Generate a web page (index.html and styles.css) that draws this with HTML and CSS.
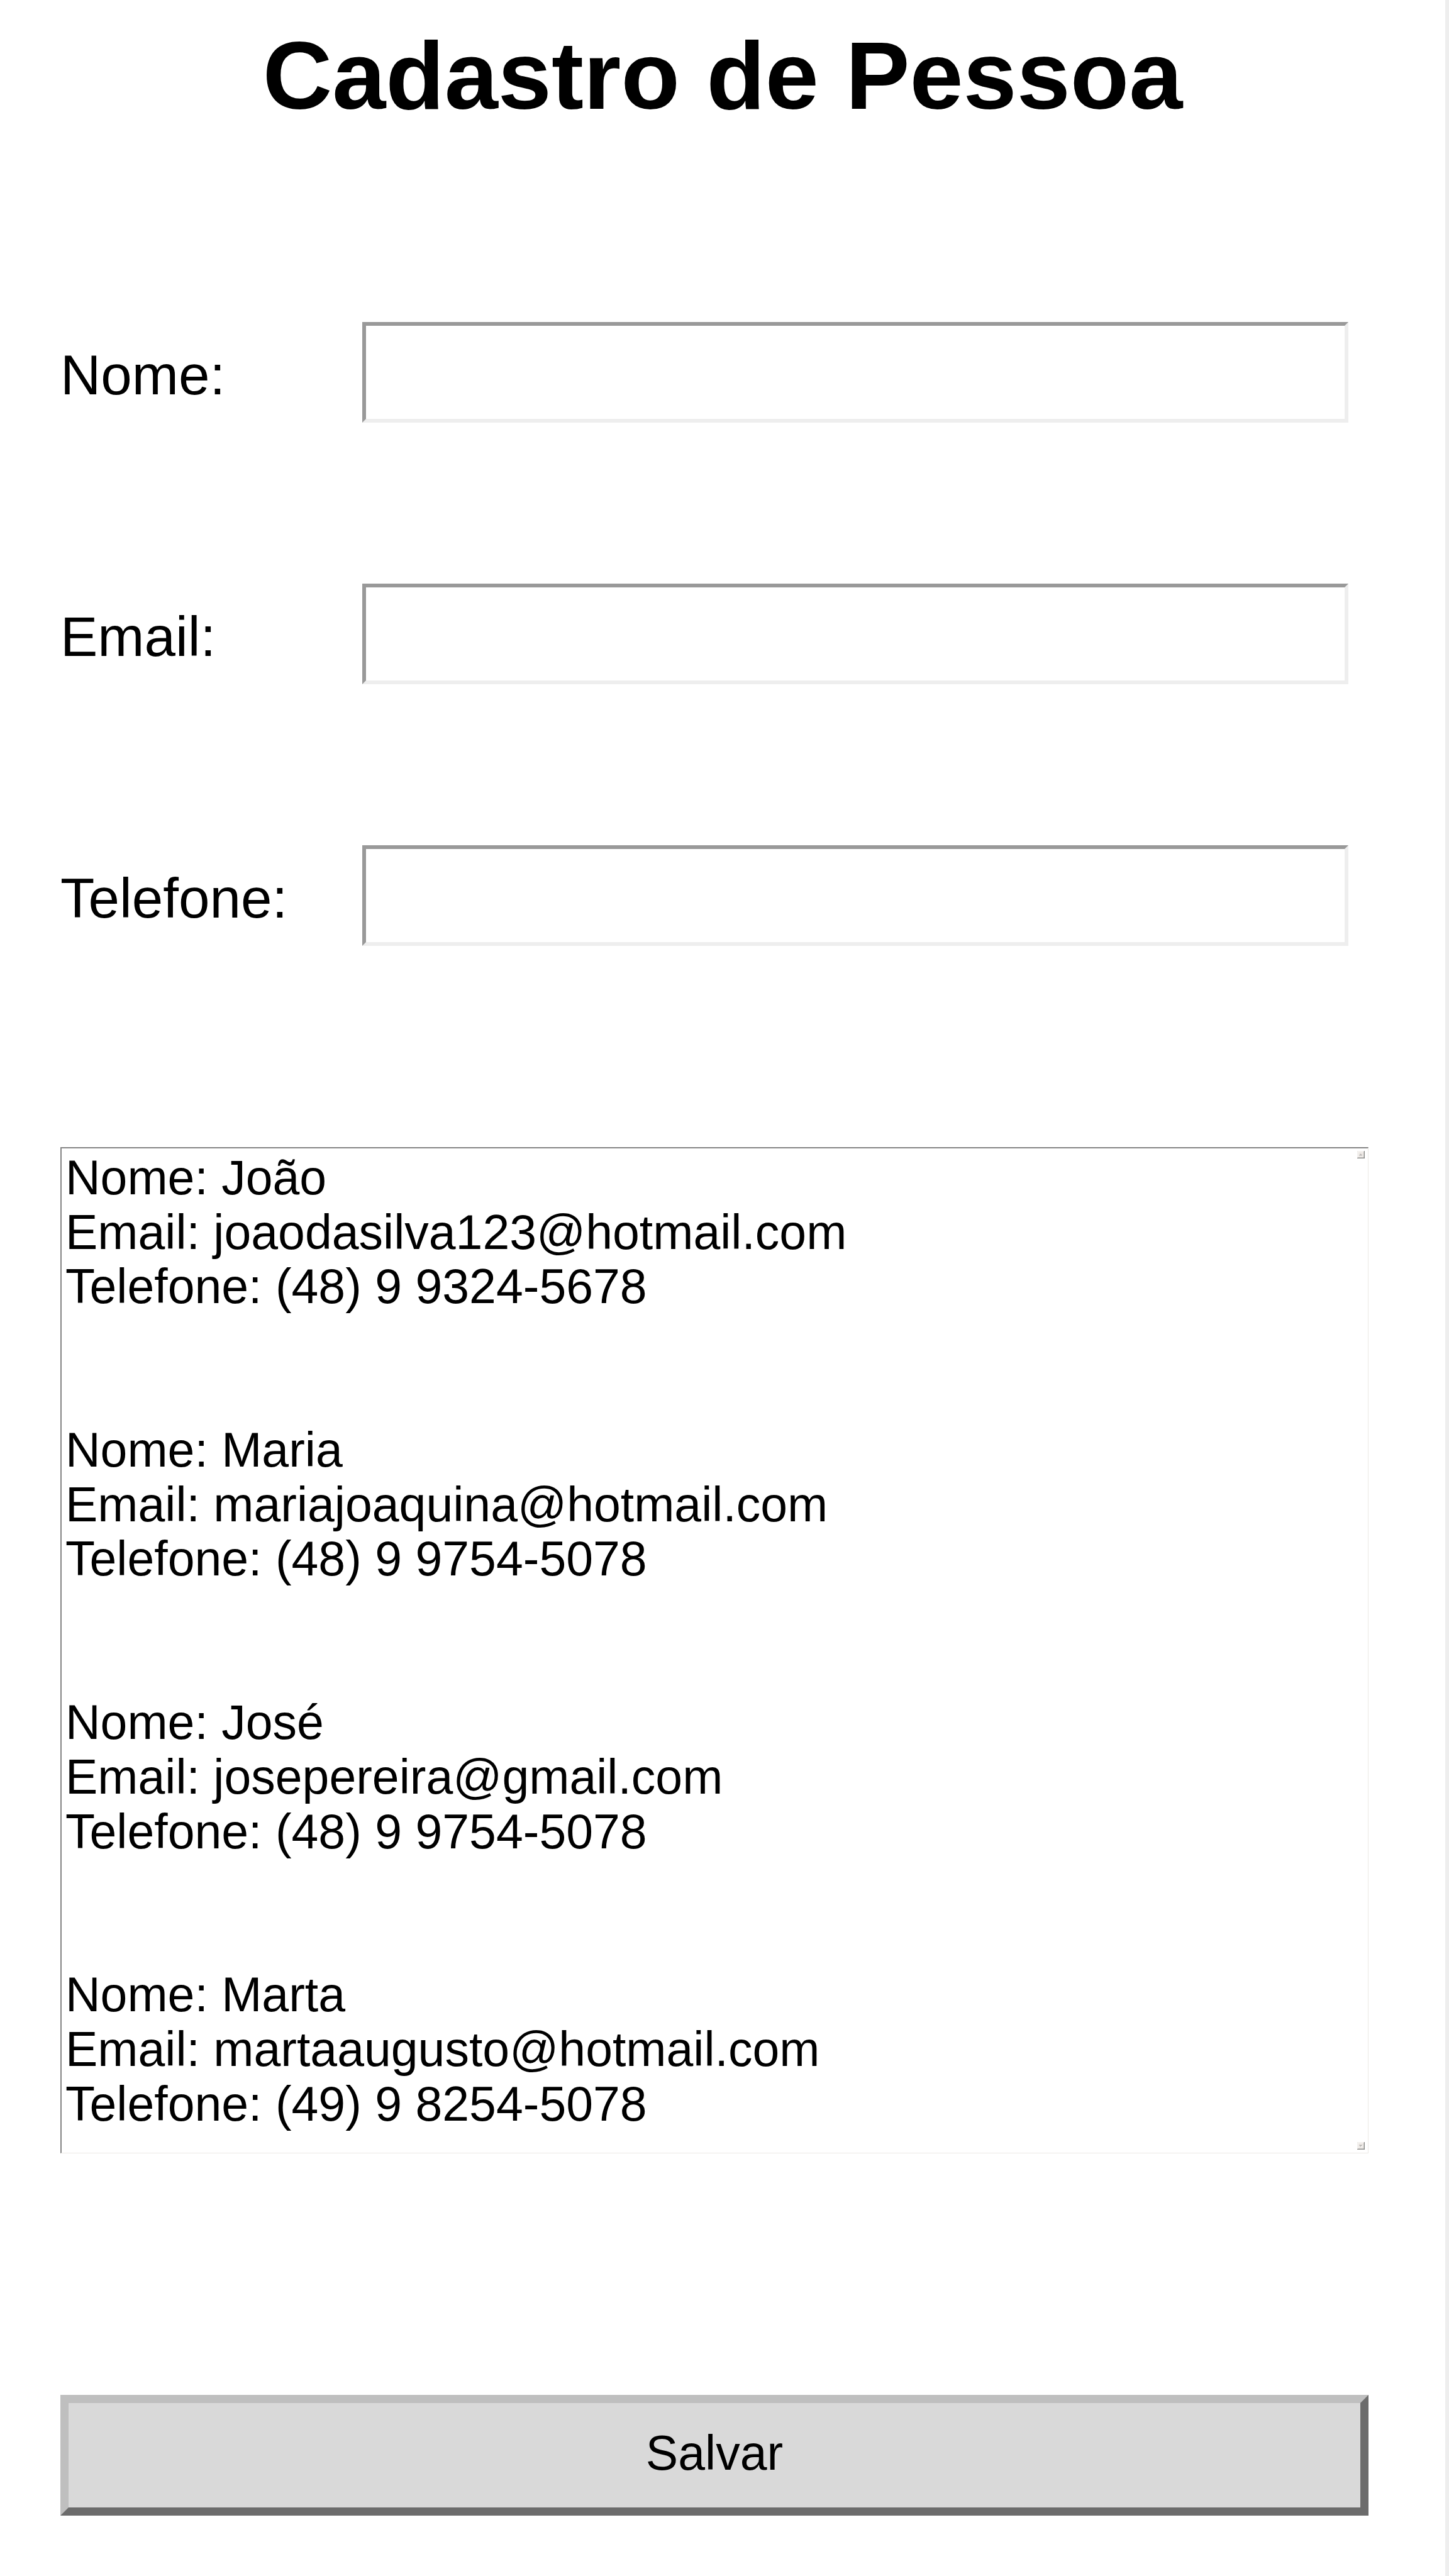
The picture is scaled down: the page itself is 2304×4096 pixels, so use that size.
FILE: index.html
```html
<!DOCTYPE html>
<html lang="pt-BR">
<head>
<meta charset="utf-8">
<meta name="viewport" content="width=device-width, initial-scale=1">
<title>Cadastro de Pessoa</title>
<link rel="stylesheet" href="styles.css">
</head>
<body>
<main class="page">
<h1 class="title">Cadastro de Pessoa</h1>
<form class="form">
<div class="fields">
<div class="field">
<label class="label" for="nome">Nome:</label>
<input class="input" type="text" id="nome" name="nome">
</div>
<div class="field">
<label class="label" for="email">Email:</label>
<input class="input" type="email" id="email" name="email">
</div>
<div class="field">
<label class="label" for="telefone">Telefone:</label>
<input class="input" type="tel" id="telefone" name="telefone">
</div>
</div>
<div class="list">
<textarea class="records" rows="18" aria-label="Pessoas cadastradas" spellcheck="false" readonly>
Nome: João
Email: joaodasilva123@hotmail.com
Telefone: (48) 9 9324-5678


Nome: Maria
Email: mariajoaquina@hotmail.com
Telefone: (48) 9 9754-5078


Nome: José
Email: josepereira@gmail.com
Telefone: (48) 9 9754-5078


Nome: Marta
Email: martaaugusto@hotmail.com
Telefone: (49) 9 8254-5078</textarea>
<button class="arrow arrow-up" type="button" aria-label="Rolar para cima">
<svg class="arrow-icon" viewBox="0 0 16 16" aria-hidden="true"><path fill="#ede9e5" d="M0 0h16v16H0z"/><path fill="#fff" d="M1 1h13v1H2v12H1zM5 10h7v1H5z"/><path fill="#999" d="M14 1h1v14H1v-1h13z"/><path fill="#6c6f6c" d="M15 0h1v16H0v-1h15z"/><path fill="#b5b2b0" d="M7 6h1v1h1v1h1v1h1v1H4V9h1V8h1V7h1z"/></svg>
</button>
<button class="arrow arrow-down" type="button" aria-label="Rolar para baixo">
<svg class="arrow-icon" viewBox="0 0 16 16" aria-hidden="true"><path fill="#ede9e5" d="M0 0h16v16H0z"/><path fill="#fff" d="M1 1h13v1H2v12H1zM11 7h1v1h-1v1h-1v1H9v1H8V9h1V8h1z"/><path fill="#999" d="M14 1h1v14H1v-1h13z"/><path fill="#6c6f6c" d="M15 0h1v16H0v-1h15z"/><path fill="#b5b2b0" d="M4 6h7v1h-1v1H9v1H8v1H7V9H6V8H5V7H4z"/></svg>
</button>
</div>
<button class="save" type="submit">Salvar</button>
</form>
</main>
</body>
</html>
```
FILE: styles.css
```css
* {
  box-sizing: border-box;
}

body {
  margin: 0;
  background: #fff;
  color: #000;
  font-family: "Liberation Sans", Arial, sans-serif;
}

.page {
  min-height: 100vh;
  padding: 32px 0 96px;
  border-right: 6px solid #eee;
}

.title {
  margin: 0 0 304px;
  font-size: 153px;
  line-height: 176px;
  text-align: center;
}

.form,
.fields {
  display: flex;
  flex-direction: column;
}

.form {
  padding: 0 122px 0 96px;
}

.fields {
  gap: 256px;
  padding-right: 32px;
}

.field {
  display: grid;
  grid-template-columns: 480px 1fr;
  align-items: center;
}

.label {
  padding-top: 8px;
  font-size: 89px;
  line-height: 104px;
}

.input {
  width: 100%;
  height: 160px;
  padding: 0 24px;
  border: 6px solid;
  border-color: #999 #eee #eee #999;
  border-radius: 0;
  background: #fff;
  color: inherit;
  font: inherit;
  font-size: 77px;
}

.list {
  position: relative;
  margin: 320px 0 384px;
}

.records {
  display: block;
  width: 100%;
  height: 1600px;
  padding: 3px 6px;
  border: 2px solid;
  border-color: #848484 #ece9e6 #ece9e6 #848484;
  border-right-width: 1px;
  border-bottom-width: 1px;
  border-radius: 0;
  overflow: hidden;
  resize: none;
  background: #fff;
  color: inherit;
  font: inherit;
  font-size: 77px;
  line-height: 1.125;
}

.arrow {
  position: absolute;
  right: 6px;
  width: 12px;
  height: 12px;
  padding: 0;
  border: 0;
  background: none;
}

.arrow-up {
  top: 6px;
}

.arrow-down {
  bottom: 6px;
}

.arrow-icon {
  display: block;
  width: 100%;
  height: 100%;
}

.save {
  height: 192px;
  padding: 0 0 8px;
  border: 13px solid;
  border-color: #bfbfbf #6c6c6c #6c6c6c #bfbfbf;
  border-radius: 0;
  background: #d9d9d9;
  color: inherit;
  font: inherit;
  font-size: 77px;
}
```
